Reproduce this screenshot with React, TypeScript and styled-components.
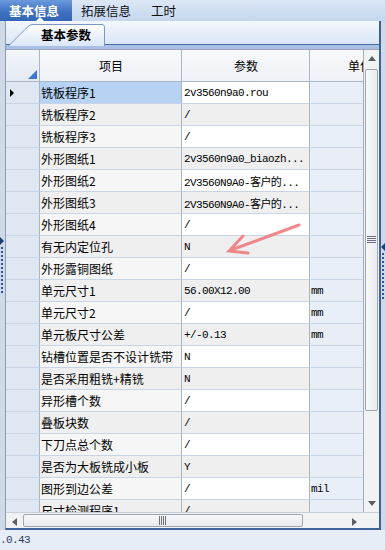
import styled, { createGlobalStyle } from "styled-components";

const GlobalStyle = createGlobalStyle`
  html, body {
    margin: 0;
    padding: 0;
    background: #e6edf7;
  }
  * {
    box-sizing: border-box;
  }
`;

const CJK = `"Noto Sans CJK SC", "Liberation Sans", sans-serif`;
const MONO = `"Liberation Mono", "Noto Sans CJK SC", monospace`;

const Screen = styled.div`
  position: relative;
  width: 385px;
  height: 550px;
  overflow: hidden;
  display: flex;
  flex-direction: column;
  font-family: ${CJK};
  font-size: 12px;
  color: #000;
`;

const TopTabs = styled.div`
  height: 21px;
  display: flex;
  align-items: stretch;
  background: linear-gradient(#dce7f5, #c4d6ee);
`;

const TopTab = styled.div<{ $active?: boolean }>`
  position: relative;
  display: flex;
  align-items: center;
  padding: 0 ${(p) => (p.$active ? "8px 0 9px" : "11px 0 9px")};
  width: ${(p) => (p.$active ? "72px" : "auto")};
  font-size: 12.5px;
  font-weight: ${(p) => (p.$active ? 700 : 400)};
  color: ${(p) => (p.$active ? "#fff" : "#111")};
  background: ${(p) =>
    p.$active ? "linear-gradient(#6c9ade, #3c6fbf 60%, #3466b6)" : "transparent"};
  &::after {
    content: "";
    display: ${(p) => (p.$active ? "block" : "none")};
    position: absolute;
    left: 36px;
    bottom: 0;
    border-left: 4px solid transparent;
    border-right: 4px solid transparent;
    border-bottom: 4px solid #fff;
  }
`;

const Body = styled.div`
  display: flex;
  flex: 1;
  min-height: 0;
`;

const Splitter = styled.div<{ $side: "left" | "right" }>`
  position: relative;
  width: ${(p) => (p.$side === "left" ? "5px" : "4px")};
  background: #cfd9e7;
`;

const SplitterDots = styled.div<{ $top: number }>`
  position: absolute;
  left: 1px;
  top: ${(p) => p.$top}px;
  width: 2px;
  height: 46px;
  background: repeating-linear-gradient(#2f5596 0 2px, transparent 2px 4px);
`;

const SplitterArrow = styled.div<{ $side: "left" | "right"; $top: number }>`
  position: absolute;
  top: ${(p) => p.$top}px;
  left: 0;
  border-top: 4px solid transparent;
  border-bottom: 4px solid transparent;
  ${(p) =>
    p.$side === "left"
      ? "border-left: 4px solid #1d3f78;"
      : "border-right: 4px solid #1d3f78;"}
`;

const Panel = styled.div`
  flex: 1;
  display: flex;
  flex-direction: column;
  border-left: 1px solid #8e9db3;
  border-right: 2px solid #3f6199;
  border-bottom: 2px solid #3f6199;
  min-width: 0;
`;

const SubStrip = styled.div`
  height: 24px;
  display: flex;
  align-items: flex-end;
  padding-left: 2px;
  background: linear-gradient(#f3f7fd, #dbe6f6);
  border-bottom: 1px solid #4b6ea8;
`;

const SubTab = styled.div`
  position: relative;
  height: 21px;
  width: 98px;
  display: flex;
  align-items: center;
  padding-left: 33px;
  font-size: 12.5px;
  font-weight: 700;
  margin-bottom: -1px;
`;

const TabShape = styled.svg`
  position: absolute;
  left: 0;
  top: 0;
  z-index: 0;
`;

const SubTabLabel = styled.span`
  position: relative;
  z-index: 1;
`;

const Band = styled.div`
  height: 4px;
  background: #a7c0e4;
`;

const GridBody = styled.div`
  flex: 1;
  display: flex;
  min-height: 0;
  border-top: 1px solid #9aa6b6;
`;

const Table = styled.div`
  flex: 1;
  min-width: 0;
  overflow: hidden;
  background: #fff;
`;

const Row = styled.div<{ $header?: boolean }>`
  display: grid;
  grid-template-columns: 34px 142px 128px 100px;
  height: ${(p) => (p.$header ? "32px" : "22px")};
`;

type Tone = "head" | "corner" | "rowhead" | "name" | "param" | "unit";

const Cell = styled.div<{ $tone: Tone; $odd?: boolean; $selected?: boolean }>`
  position: relative;
  display: flex;
  align-items: center;
  padding-left: ${(p) => (p.$tone === "param" ? "2px" : "1px")};
  border-right: 1px solid #aab5c4;
  border-bottom: 1px solid
    ${(p) => (p.$tone === "head" || p.$tone === "corner" ? "#a9b6c8" : "#c9d5e5")};
  white-space: nowrap;
  overflow: hidden;
  justify-content: ${(p) => (p.$tone === "head" ? "center" : "flex-start")};
  font-family: ${(p) => (p.$tone === "param" || p.$tone === "unit" ? MONO : CJK)};
  font-size: ${(p) => (p.$tone === "param" || p.$tone === "unit" ? "11px" : "12px")};
  letter-spacing: ${(p) => (p.$tone === "param" || p.$tone === "unit" ? "-0.6px" : "0")};
  background: ${(p) => {
    if (p.$selected) return "#b7d3f3";
    switch (p.$tone) {
      case "head":
        return "linear-gradient(#f8f9fb, #eef1f6)";
      case "corner":
        return "linear-gradient(#f3f6fa, #e4eaf3)";
      case "rowhead":
        return "#dfe7f2";
      case "name":
        return p.$odd ? "#f6f6f6" : "#efefef";
      case "param":
        return p.$odd ? "#ffffff" : "#efefef";
      default:
        return p.$odd ? "#e8eff9" : "#e9eef6";
    }
  }};
`;

const CornerMark = styled.div`
  position: absolute;
  right: 2px;
  bottom: 2px;
  border-left: 9px solid transparent;
  border-bottom: 9px solid #3c78d2;
`;

const RowPointer = styled.div`
  margin-left: 3px;
  border-top: 4px solid transparent;
  border-bottom: 4px solid transparent;
  border-left: 4px solid #000;
`;

const VScroll = styled.div`
  width: 16px;
  display: flex;
  flex-direction: column;
  background: #f1f2f4;
  border-left: 1px solid #a3adba;
`;

const ScrollBtn = styled.div<{ $w?: number }>`
  height: 17px;
  width: ${(p) => (p.$w ? `${p.$w}px` : "auto")};
  display: flex;
  align-items: center;
  justify-content: center;
  flex: none;
`;

const VThumb = styled.div`
  margin: 2px 1px 0 1px;
  height: 342px;
  display: flex;
  align-items: center;
  justify-content: center;
  background: linear-gradient(90deg, #f7f8fa, #e9ecf0);
  border: 1px solid #9ea6b1;
  border-radius: 2px;
`;

const VTrack = styled.div`
  flex: 1;
`;

const HScrollRow = styled.div`
  height: 16px;
  display: flex;
  background: #f1f2f4;
  border-top: 1px solid #c7cfd9;
`;

const HThumb = styled.div`
  width: 280px;
  margin: 1px 0;
  display: flex;
  align-items: center;
  justify-content: center;
  background: linear-gradient(#f7f8fa, #e6e9ee);
  border: 1px solid #9ea6b1;
  border-radius: 2px;
`;

const HTrack = styled.div`
  flex: 1;
`;

const ScrollCorner = styled.div`
  width: 16px;
  background: #f1f2f4;
`;

const Status = styled.div`
  height: 20px;
  display: flex;
  align-items: center;
  font-family: "Liberation Mono", monospace;
  font-size: 11px;
  letter-spacing: -0.6px;
  color: #2b3f5c;
  background: #e6edf7;
`;

const Overlay = styled.svg`
  position: absolute;
  left: 0;
  top: 0;
  pointer-events: none;
`;

interface Item {
  name: string;
  param: string;
  unit?: string;
}

const items: Item[] = [
  { name: "铣板程序1", param: "2v3560n9a0.rou" },
  { name: "铣板程序2", param: "/" },
  { name: "铣板程序3", param: "/" },
  { name: "外形图纸1", param: "2v3560n9a0_biaozh..." },
  { name: "外形图纸2", param: "2V3560N9A0-客户的..." },
  { name: "外形图纸3", param: "2V3560N9A0-客户的..." },
  { name: "外形图纸4", param: "/" },
  { name: "有无内定位孔", param: "N" },
  { name: "外形露铜图纸", param: "/" },
  { name: "单元尺寸1", param: "56.00X12.00", unit: "mm" },
  { name: "单元尺寸2", param: "/", unit: "mm" },
  { name: "单元板尺寸公差", param: "+/-0.13", unit: "mm" },
  { name: "钻槽位置是否不设计铣带", param: "N" },
  { name: "是否采用粗铣+精铣", param: "N" },
  { name: "异形槽个数", param: "/" },
  { name: "叠板块数", param: "/" },
  { name: "下刀点总个数", param: "/" },
  { name: "是否为大板铣成小板", param: "Y" },
  { name: "图形到边公差", param: "/", unit: "mil" },
  { name: "尺寸检测程序1", param: "/" },
];

const Tri = ({ dir }: { dir: "up" | "down" | "left" | "right" }) => {
  const pts = {
    up: "0,5 4,0 8,5",
    down: "0,0 8,0 4,5",
    left: "5,0 5,8 0,4",
    right: "0,0 0,8 5,4",
  }[dir];
  const vertical = dir === "up" || dir === "down";
  return (
    <svg width={vertical ? 8 : 5} height={vertical ? 5 : 8}>
      <polygon points={pts} fill="#5a5f66" />
    </svg>
  );
};

const Grip = ({ vertical }: { vertical?: boolean }) => (
  <svg width={vertical ? 9 : 8} height={vertical ? 8 : 9}>
    {[0, 1, 2, 3].map((i) =>
      vertical ? (
        <line key={i} x1="0" x2="9" y1={i * 2 + 0.5} y2={i * 2 + 0.5} stroke="#6b727c" />
      ) : (
        <line key={i} y1="0" y2="9" x1={i * 2 + 0.5} x2={i * 2 + 0.5} stroke="#6b727c" />
      )
    )}
  </svg>
);

export default function App() {
  return (
    <Screen>
      <GlobalStyle />
      <TopTabs>
        <TopTab $active>基本信息</TopTab>
        <TopTab>拓展信息</TopTab>
        <TopTab>工时</TopTab>
      </TopTabs>

      <Body>
        <Splitter $side="left">
          <SplitterArrow $side="left" $top={216} />
          <SplitterDots $top={226} />
        </Splitter>

        <Panel>
          <SubStrip>
            <SubTab>
              <TabShape width="98" height="22" viewBox="0 0 98 22">
                <defs>
                  <linearGradient id="tabfill" x1="0" y1="0" x2="0" y2="1">
                    <stop offset="0" stopColor="#ffffff" />
                    <stop offset="1" stopColor="#dbe7f7" />
                  </linearGradient>
                </defs>
                <path
                  d="M0.5 22 L20 2.5 Q22 0.5 25 0.5 L94 0.5 Q96.5 0.5 96.5 3 L96.5 22"
                  fill="url(#tabfill)"
                  stroke="#7a98c6"
                />
              </TabShape>
              <SubTabLabel>基本参数</SubTabLabel>
            </SubTab>
          </SubStrip>
          <Band />

          <GridBody>
            <Table>
              <Row $header>
                <Cell $tone="corner">
                  <CornerMark />
                </Cell>
                <Cell $tone="head">项目</Cell>
                <Cell $tone="head">参数</Cell>
                <Cell $tone="head">单位</Cell>
              </Row>
              {items.map((it, i) => {
                const odd = i % 2 === 0;
                return (
                  <Row key={it.name}>
                    <Cell $tone="rowhead">{i === 0 && <RowPointer />}</Cell>
                    <Cell $tone="name" $odd={odd} $selected={i === 0}>
                      {it.name}
                    </Cell>
                    <Cell $tone="param" $odd={odd}>
                      {it.param}
                    </Cell>
                    <Cell $tone="unit" $odd={odd}>
                      {it.unit ?? ""}
                    </Cell>
                  </Row>
                );
              })}
            </Table>

            <VScroll>
              <ScrollBtn>
                <Tri dir="up" />
              </ScrollBtn>
              <VThumb>
                <Grip vertical />
              </VThumb>
              <VTrack />
              <ScrollBtn>
                <Tri dir="down" />
              </ScrollBtn>
            </VScroll>
          </GridBody>

          <HScrollRow>
            <ScrollBtn $w={17}>
              <Tri dir="left" />
            </ScrollBtn>
            <HThumb>
              <Grip />
            </HThumb>
            <HTrack />
            <ScrollBtn $w={17}>
              <Tri dir="right" />
            </ScrollBtn>
            <ScrollCorner />
          </HScrollRow>
        </Panel>

        <Splitter $side="right">
          <SplitterArrow $side="right" $top={222} />
          <SplitterDots $top={232} />
        </Splitter>
      </Body>

      <Status>.0.43</Status>

      <Overlay width="385" height="550">
        <g stroke="#f07c80" strokeWidth="3" strokeLinecap="round" fill="none" opacity="0.9">
          <line x1="299" y1="225" x2="231" y2="250" />
          <polyline points="243,236 229,251 248,253" />
        </g>
      </Overlay>
    </Screen>
  );
}
